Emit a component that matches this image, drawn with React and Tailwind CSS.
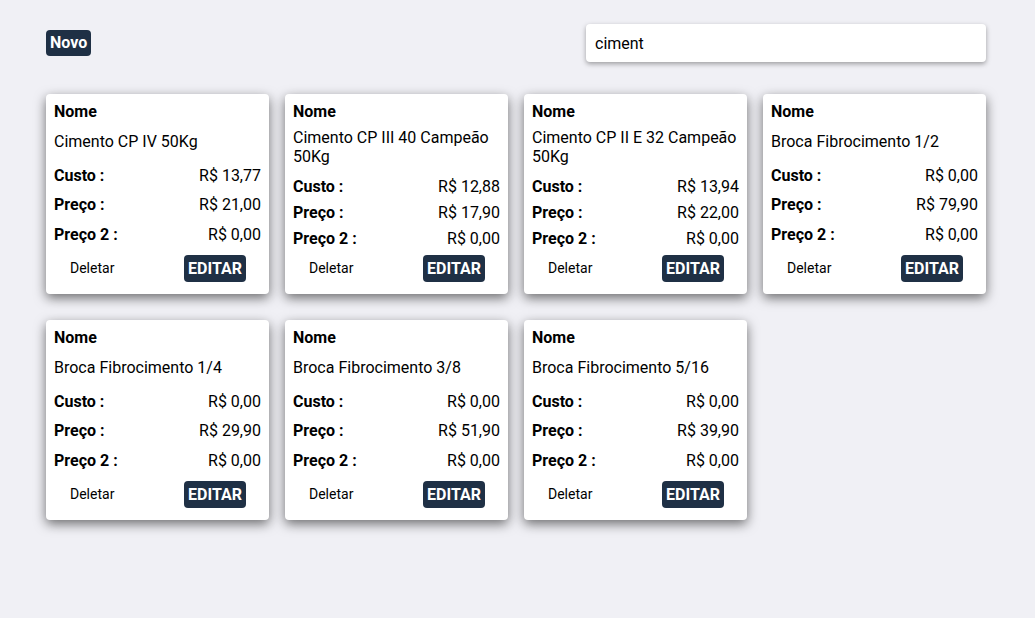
import React from "react";

const items = [
  { nome: "Cimento CP IV 50Kg", custo: "R$ 13,77", preco: "R$ 21,00", preco2: "R$ 0,00" },
  { nome: "Cimento CP III 40 Campeão 50Kg", custo: "R$ 12,88", preco: "R$ 17,90", preco2: "R$ 0,00" },
  { nome: "Cimento CP II E 32 Campeão 50Kg", custo: "R$ 13,94", preco: "R$ 22,00", preco2: "R$ 0,00" },
  { nome: "Broca Fibrocimento 1/2", custo: "R$ 0,00", preco: "R$ 79,90", preco2: "R$ 0,00" },
  { nome: "Broca Fibrocimento 1/4", custo: "R$ 0,00", preco: "R$ 29,90", preco2: "R$ 0,00" },
  { nome: "Broca Fibrocimento 3/8", custo: "R$ 0,00", preco: "R$ 51,90", preco2: "R$ 0,00" },
  { nome: "Broca Fibrocimento 5/16", custo: "R$ 0,00", preco: "R$ 39,90", preco2: "R$ 0,00" },
];

function Row({ label, value }) {
  return (
    <div className="flex justify-between leading-[19px]">
      <span className="font-bold">{label}</span>
      <span>{value}</span>
    </div>
  );
}

function Card({ item }) {
  return (
    <div className="flex h-[200px] flex-col justify-between rounded-[4px] bg-white px-2 pt-[8px] pb-[12px] shadow-[0_4px_12px_rgba(0,0,0,0.55)]">
      <div className="font-bold leading-[19px]">Nome</div>
      <div className="mb-1 leading-[19px]">{item.nome}</div>
      <Row label="Custo :" value={item.custo} />
      <Row label="Preço :" value={item.preco} />
      <Row label="Preço 2 :" value={item.preco2} />
      <div className="flex items-center justify-between">
        <button className="px-4 text-[14px] leading-[27px] text-black">Deletar</button>
        <button className="mr-[15px] h-[27px] rounded-[4px] bg-[#1f3045] px-[4px] font-bold leading-[27px] text-white">
          EDITAR
        </button>
      </div>
    </div>
  );
}

export default function App() {
  return (
    <div
      className="min-h-[618px] w-full bg-[#f0f0f5] text-[16px] text-black"
      style={{ fontFamily: "Roboto, 'Liberation Sans', sans-serif" }}
    >
      <div className="ml-[46px] w-[940px] pt-[24px]">
        <div className="flex items-center justify-between">
          <button className="h-[26px] rounded-[4px] bg-[#1f3045] px-[4px] font-bold text-white">Novo</button>
          <input
            value="ciment"
            readOnly
            className="h-[38px] w-[400px] rounded-[4px] bg-white px-[9px] text-[16px] text-black shadow-[0_2px_5px_rgba(0,0,0,0.35)] outline-none"
          />
        </div>
        <div className="mt-[32px] grid grid-cols-4 gap-x-4 gap-y-[26px]">
          {items.map((it) => (
            <Card key={it.nome} item={it} />
          ))}
        </div>
      </div>
    </div>
  );
}
